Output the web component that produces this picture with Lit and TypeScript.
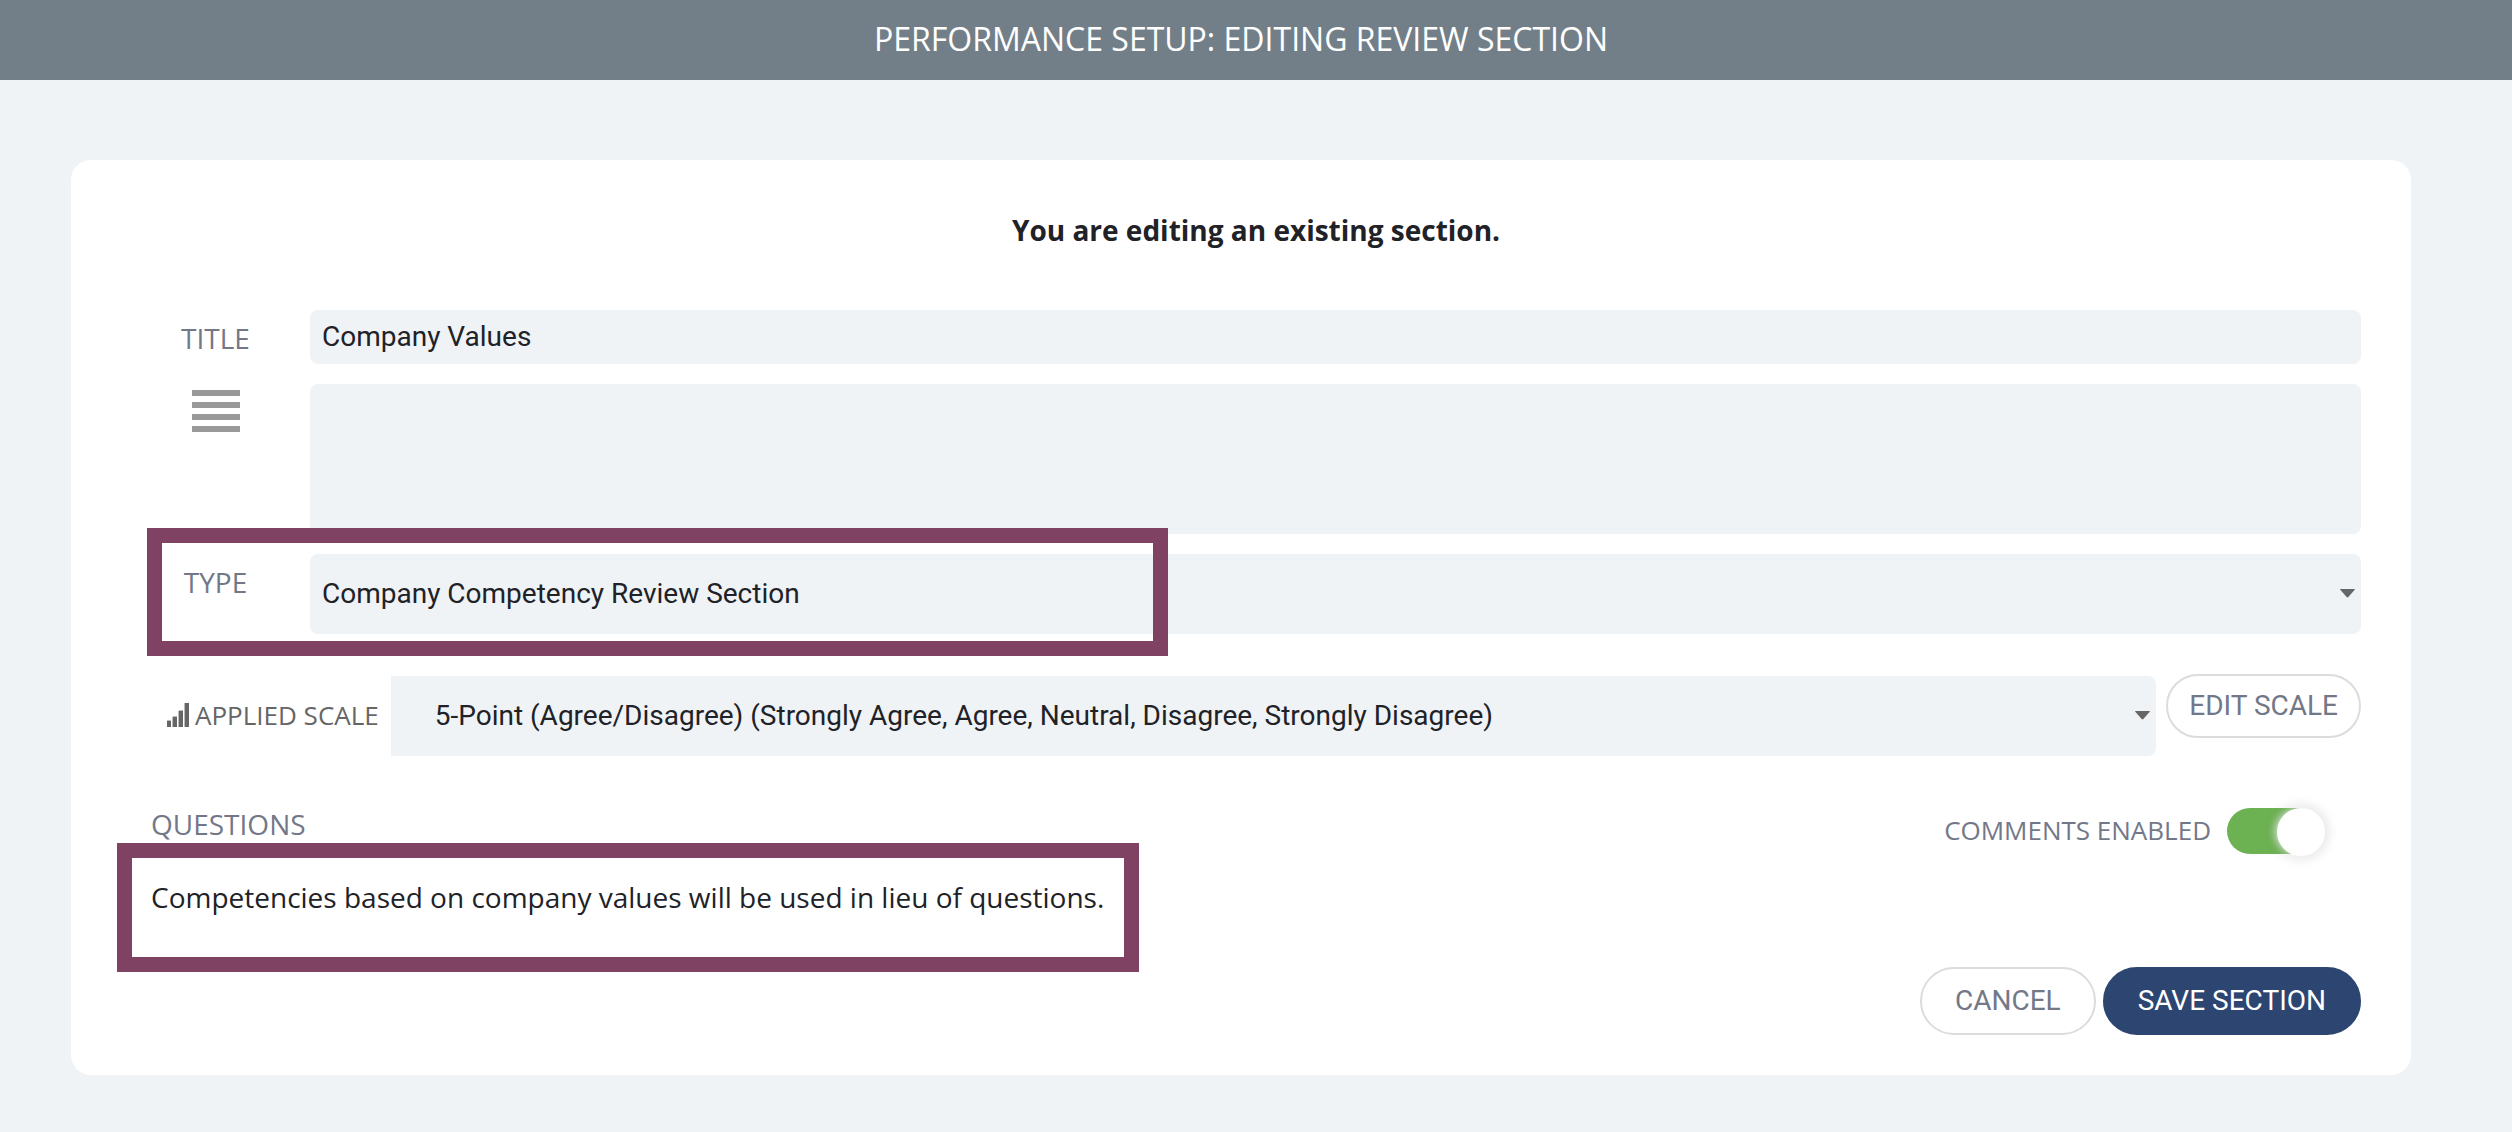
import { LitElement, html, css, svg } from "lit";
import { customElement, state } from "lit/decorators.js";

const caret = html`<svg class="caret" viewBox="0 0 15 9" width="15" height="9" aria-hidden="true">
  ${svg`<path d="M0.6 0H14.4Q15.3 0 14.7 0.8L8.4 8.1Q7.5 9 6.6 8.1L0.3 0.8Q-0.3 0 0.6 0Z" fill="#666" />`}
</svg>`;

@customElement("app-root")
export class AppRoot extends LitElement {
  static styles = css`
    :host {
      display: block;
      min-height: 100vh;
      background: #eff3f6;
      color: #212227;
      font-family: "Open Sans", "Liberation Sans", sans-serif;
      font-size: 28px;
      line-height: 40px;
    }
    * {
      box-sizing: border-box;
    }
    .topbar {
      display: flex;
      justify-content: center;
      align-items: center;
      height: 80px;
      padding: 0 101px 2px 71px;
      background: #737f88;
    }
    .topbar h1 {
      margin: 0;
      color: #fff;
      font-size: 32px;
      font-weight: 400;
      line-height: 44px;
    }
    .page {
      padding: 80px 101px 57px 71px;
    }
    .card {
      display: flex;
      flex-direction: column;
      padding: 50px 50px 40px 80px;
      border-radius: 20px;
      background: #fff;
    }
    .heading {
      margin: 0 0 60px;
      font-size: 28px;
      font-weight: 700;
      line-height: 40px;
      text-align: center;
    }
    .fields {
      display: flex;
      flex-direction: column;
      gap: 20px;
    }
    .row {
      display: grid;
      grid-template-columns: 129px minmax(0, 1fr);
      column-gap: 30px;
      position: relative;
    }
    .label {
      padding-top: 8px;
      color: #737888;
      text-align: center;
    }
    .label.graphic {
      padding-top: 5px;
    }
    .label svg {
      display: block;
      margin: 0 auto;
    }
    .field,
    .select select {
      display: block;
      width: 100%;
      margin: 0;
      padding: 0 12px 2px;
      border: 0;
      border-radius: 8px;
      background: #eff3f6;
      color: #212227;
      font-family: Roboto, "Liberation Sans", sans-serif;
      font-size: 28px;
      outline: none;
    }
    .text {
      height: 54px;
    }
    .area {
      height: 150px;
      padding: 10px 12px;
      resize: none;
    }
    .select {
      display: grid;
      align-items: center;
    }
    .select select {
      grid-area: 1 / 1;
      height: 80px;
      appearance: none;
    }
    .caret {
      grid-area: 1 / 1;
      justify-self: end;
      margin: 0 6px 2px 0;
      pointer-events: none;
    }
    .scale {
      display: flex;
      align-items: flex-end;
      gap: 10px;
      min-height: 82px;
      margin-top: 40px;
      padding-left: 16px;
    }
    .scale-label {
      display: flex;
      align-items: center;
      gap: 6px;
      height: 80px;
      padding: 0 2px 2px 0;
      color: #666;
      font-size: 26px;
      white-space: nowrap;
    }
    .scale .select {
      flex: 1;
      min-width: 0;
    }
    .scale .select select {
      padding: 0 44px 2px;
      border-radius: 0 8px 8px 0;
    }
    .button {
      height: 68px;
      padding: 0 33px 2px;
      border: 2px solid #dcdcdc;
      border-radius: 34px;
      background: #fff;
      color: #737888;
      font-family: Roboto, "Liberation Sans", sans-serif;
      font-size: 28px;
      white-space: nowrap;
      cursor: pointer;
    }
    .button.compact {
      align-self: flex-start;
      height: 64px;
      padding: 0 21px 2px;
    }
    .button.primary {
      border-color: #2d4571;
      background: #2d4571;
      color: #fff;
    }
    .questions {
      display: flex;
      justify-content: space-between;
      align-items: flex-start;
      margin-top: 48px;
    }
    .questions h3 {
      margin: 0;
      color: #737888;
      font-size: 28px;
      font-weight: 400;
    }
    .comments {
      display: flex;
      align-items: center;
      gap: 16px;
      margin-top: 4px;
      padding-right: 36px;
      color: #737888;
      font-size: 26px;
      cursor: pointer;
    }
    .comments span {
      padding-bottom: 2px;
    }
    .switch {
      appearance: none;
      position: relative;
      width: 98px;
      height: 46px;
      margin: 0;
      border-radius: 23px;
      background: #ccc;
      cursor: pointer;
    }
    .switch::before {
      content: "";
      position: absolute;
      top: 0;
      left: 0;
      width: 48px;
      height: 48px;
      border-radius: 50%;
      background: #fff;
      box-shadow: 0 0 16px rgba(0, 0, 0, 0.15);
    }
    .switch:checked {
      background: linear-gradient(90deg, #6cb152 0 76px, transparent 76px);
    }
    .switch:checked::before {
      left: 50px;
      box-shadow: -2px 0 8px rgba(255, 255, 255, 0.8), 0 0 14px rgba(0, 0, 0, 0.2);
    }
    .note {
      position: relative;
      margin: 23px 0 50px;
    }
    .actions {
      display: flex;
      justify-content: flex-end;
      gap: 7px;
    }
    .mark {
      position: absolute;
      border: 15px solid #804263;
      pointer-events: none;
    }
    .mark.type {
      top: -26px;
      left: -4px;
      width: 1021px;
      height: 128px;
    }
    .mark.competency {
      top: -34px;
      left: -34px;
      width: 1022px;
      height: 129px;
    }
  `;

  @state() private comments = true;

  render() {
    return html`
      <header class="topbar"><h1>PERFORMANCE SETUP: EDITING REVIEW SECTION</h1></header>
      <main class="page">
        <form class="card" @submit=${(e: Event) => e.preventDefault()}>
          <h2 class="heading">You are editing an existing section.</h2>

          <div class="fields">
            <div class="row">
              <label class="label" for="title">TITLE</label>
              <input class="field text" id="title" type="text" value="Company Values" />
            </div>
            <div class="row">
              <label class="label graphic" for="description" aria-label="Description">
                <svg viewBox="0 0 50 44" width="50" height="44" aria-hidden="true">
                  <path d="M1 4H49M1 16H49M1 28H49M1 40H49" stroke="#999" stroke-width="6" />
                </svg>
              </label>
              <textarea class="field area" id="description"></textarea>
            </div>
            <div class="row">
              <label class="label" for="type">TYPE</label>
              <div class="select">
                <select id="type">
                  <option>Company Competency Review Section</option>
                </select>
                ${caret}
              </div>
              <span class="mark type"></span>
            </div>
          </div>

          <div class="scale">
            <label class="scale-label" for="scale">
              <svg viewBox="0 0 22 24" width="22" height="24" aria-hidden="true">
                <path d="M0 18H4V24H0ZM6 14H10V24H6ZM12 8H16V24H12ZM18 0H22V24H18Z" fill="#666" />
                <path d="M0 17H4V18H0ZM6 13H10V14H6ZM12 7H16V8H12ZM5 14H6V24H5ZM11 8H12V24H11ZM17 0H18V24H17Z" fill="#bbb" />
              </svg>
              APPLIED SCALE
            </label>
            <div class="select">
              <select id="scale">
                <option>5-Point (Agree/Disagree) (Strongly Agree, Agree, Neutral, Disagree, Strongly Disagree)</option>
              </select>
              ${caret}
            </div>
            <button class="button compact" type="button">EDIT SCALE</button>
          </div>

          <div class="questions">
            <h3>QUESTIONS</h3>
            <label class="comments">
              <span>COMMENTS ENABLED</span>
              <input
                class="switch"
                type="checkbox"
                role="switch"
                .checked=${this.comments}
                @change=${(e: Event) => (this.comments = (e.target as HTMLInputElement).checked)}
              />
            </label>
          </div>
          <p class="note">
            Competencies based on company values will be used in lieu of questions.
            <span class="mark competency"></span>
          </p>

          <div class="actions">
            <button class="button" type="button">CANCEL</button>
            <button class="button primary" type="submit">SAVE SECTION</button>
          </div>
        </form>
      </main>
    `;
  }
}
